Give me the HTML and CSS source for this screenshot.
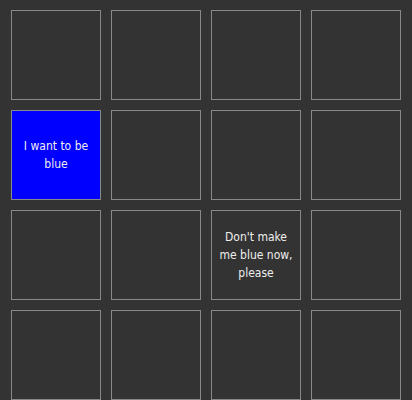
FILE: index.html
```html
<!DOCTYPE html>
<html>
<head>
<meta charset="utf-8">
<link rel="stylesheet" href="styles.css">
</head>
<body>
<div class="grid">
  <div class="cell"></div>
  <div class="cell"></div>
  <div class="cell"></div>
  <div class="cell"></div>
  <div class="cell blue">I want to be blue</div>
  <div class="cell"></div>
  <div class="cell"></div>
  <div class="cell"></div>
  <div class="cell"></div>
  <div class="cell"></div>
  <div class="cell">Don't make me blue now, please</div>
  <div class="cell"></div>
  <div class="cell"></div>
  <div class="cell"></div>
  <div class="cell"></div>
  <div class="cell"></div>
</div>
</body>
</html>
```
FILE: styles.css
```css
html, body {
  margin: 0;
  background: #333333;
  height: 100%;
  overflow: hidden;
}
.grid {
  display: grid;
  grid-template-columns: repeat(4, 90px);
  grid-auto-rows: 90px;
  gap: 10px;
  padding: 10px 0 0 11px;
}
.cell {
  box-sizing: border-box;
  border: 1px solid #888888;
  display: flex;
  align-items: center;
  justify-content: center;
  text-align: center;
  padding: 0 5px;
  color: #eeeeee;
  font-family: "DejaVu Sans Condensed", "DejaVu Sans", sans-serif;
  font-stretch: condensed;
  font-size: 12px;
  line-height: 18px;
}
.blue {
  background: #0000ff;
}
```
